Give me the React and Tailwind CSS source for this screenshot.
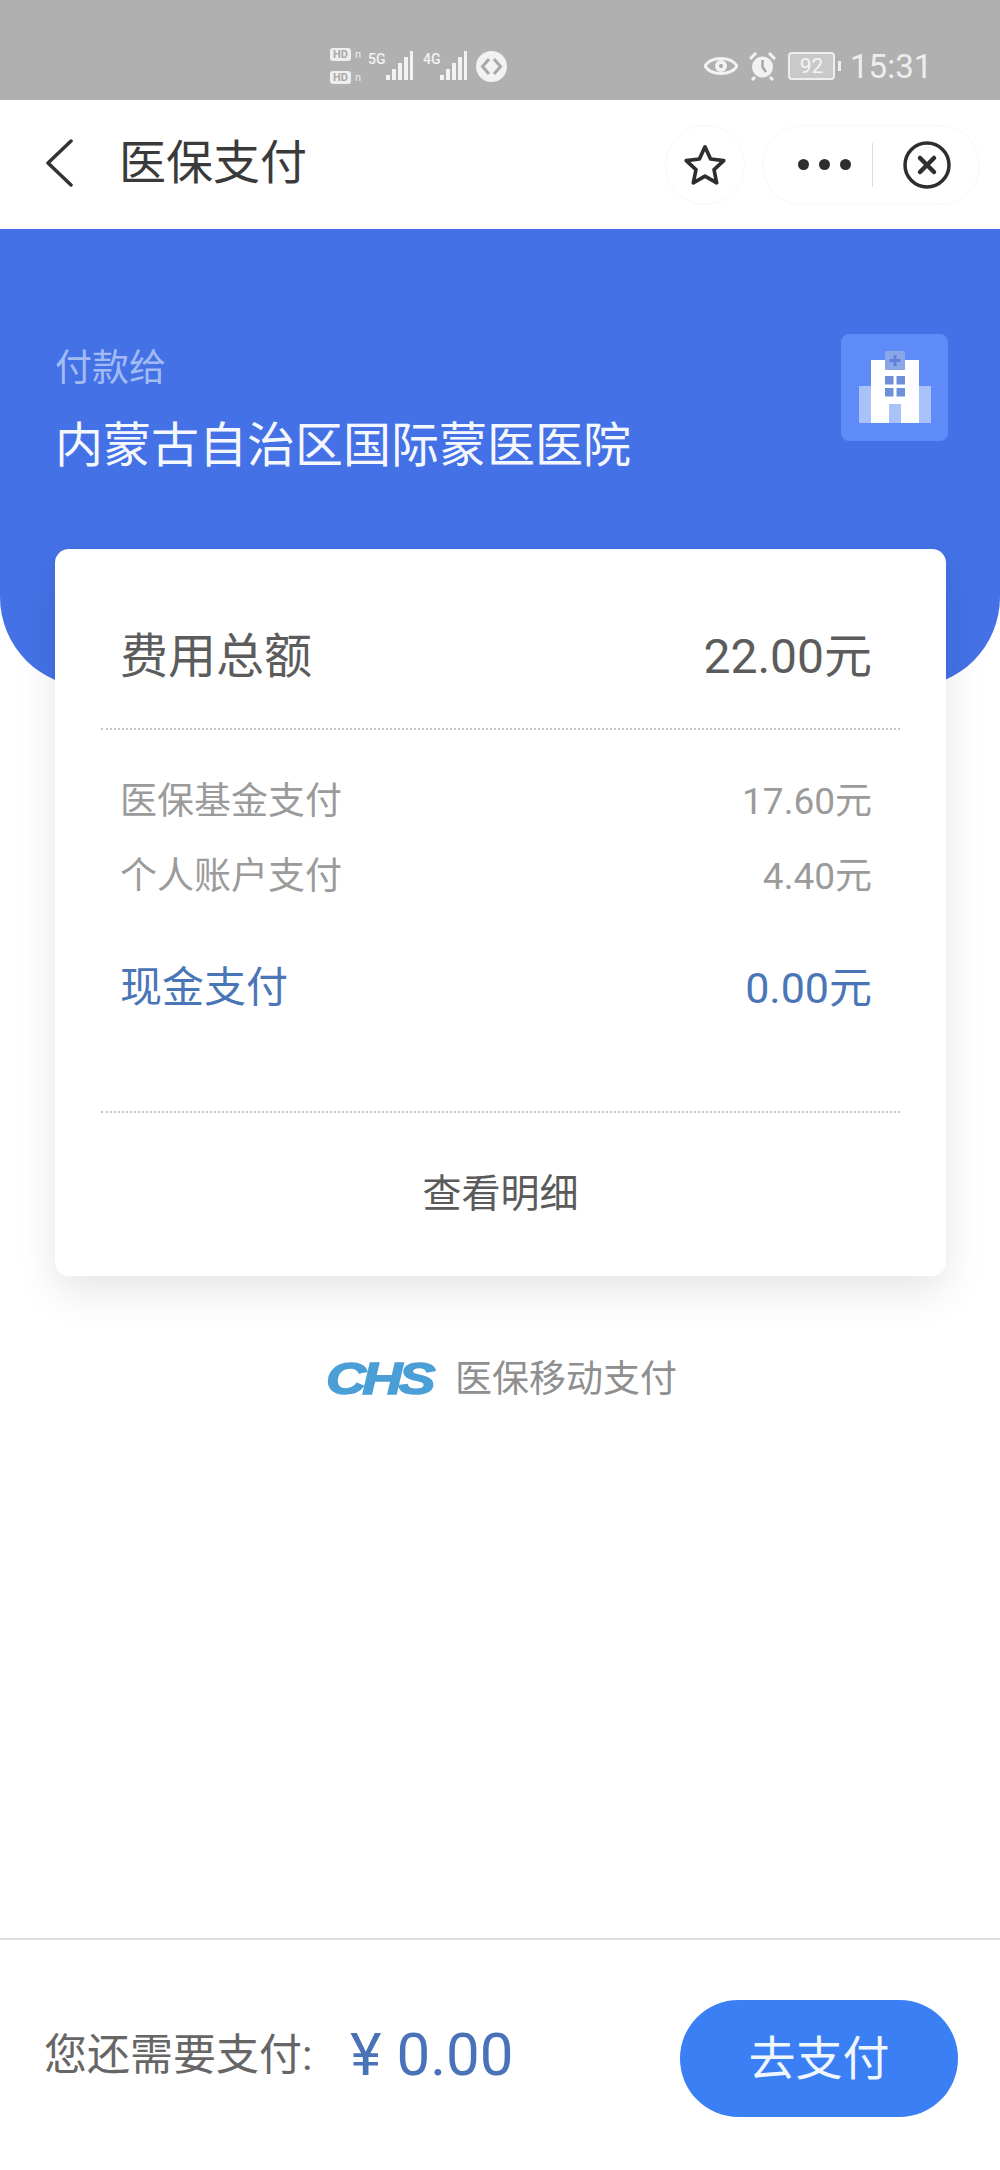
import React from "react";

const cjk = { fontFamily: '"Roboto","Noto Sans CJK SC",sans-serif' };

function Signal({ x = 0 }) {
  return (
    <g transform={`translate(${x} 0)`} fill="#f2f2f2">
      <rect x="0" y="24" width="4" height="5" />
      <rect x="6" y="18" width="4" height="11" />
      <rect x="12" y="12" width="4" height="17" />
      <rect x="18" y="6" width="4" height="23" />
      <rect x="24" y="0" width="3" height="29" />
    </g>
  );
}

function HdTag() {
  return (
    <div className="flex items-center gap-[4px]">
      <span className="flex h-[13px] w-[21px] items-center justify-center rounded-[3px] bg-[#eeeeee] text-[11px] font-bold leading-none text-[#a8a8a8]">HD</span>
      <span className="text-[11px] leading-none text-[#eeeeee]">n</span>
    </div>
  );
}

function StatusBar() {
  return (
    <div className="flex h-[100px] items-center bg-[#b0b0b0] pl-[330px] pt-[32px]" style={cjk}>
      <div className="flex flex-col gap-[10px]">
        <HdTag />
        <HdTag />
      </div>
      <div className="ml-[7px] flex h-[30px] items-start text-[14px] font-medium leading-none text-[#f2f2f2]">
        <span className="mt-[1px] w-[18px]">5G</span>
        <svg width="28" height="30" viewBox="0 0 28 30"><Signal /></svg>
        <span className="ml-[9px] mt-[1px] w-[17px]">4G</span>
        <svg width="28" height="30" viewBox="0 0 28 30"><Signal /></svg>
      </div>
      <svg className="ml-[8px]" width="31" height="31" viewBox="0 0 31 31">
        <circle cx="15.5" cy="15.5" r="15.5" fill="#f2f2f2" />
        <path d="M13 8 L6.5 15.5 L13 23 M18 8 L24.5 15.5 L18 23" fill="none" stroke="#a8a8a8" strokeWidth="3" />
      </svg>
      <svg className="ml-[197px]" width="34" height="24" viewBox="0 0 34 24">
        <path d="M1 12 C7 2 27 2 33 12 C27 22 7 22 1 12 Z" fill="none" stroke="#f2f2f2" strokeWidth="3" />
        <circle cx="17" cy="12" r="6" fill="#f2f2f2" />
        <circle cx="17" cy="12" r="2" fill="#a8a8a8" />
      </svg>
      <svg className="ml-[11px]" width="27" height="29" viewBox="0 0 27 29">
        <circle cx="13.5" cy="15" r="10.5" fill="#f2f2f2" />
        <path d="M13.5 8 V15 L17 20" fill="none" stroke="#a8a8a8" strokeWidth="2.5" />
        <path d="M1 7 L7 1 M26 7 L20 1 M6 25 L3 28 M21 25 L24 28" stroke="#f2f2f2" strokeWidth="3" />
      </svg>
      <div className="ml-[12px] flex h-[28px] w-[47px] items-center justify-center rounded-[4px] border-2 border-[#eeeeee] bg-[#c9c9c9] text-[21px] leading-none text-[#f4f4f4]">92</div>
      <div className="ml-[3px] h-[10px] w-[3px] bg-[#eeeeee]" />
      <span className="ml-[9px] text-[33px] leading-none text-[#eeeeee]">15:31</span>
    </div>
  );
}

function NavBar() {
  return (
    <div className="flex h-[129px] items-center bg-white pl-[45px] pr-[20px]" style={cjk}>
      <svg className="-mt-[3px]" width="28" height="48" viewBox="0 0 28 48">
        <path d="M26 2 L3 24 L26 46" fill="none" stroke="#333333" strokeWidth="3.5" strokeLinecap="round" strokeLinejoin="round" />
      </svg>
      <span className="-mt-[4px] ml-[46px] text-[47px] leading-none text-[#3a3a3a]">医保支付</span>
      <div className="ml-auto flex h-[80px] w-[80px] items-center justify-center rounded-full border border-[#f8f8f8]">
        <svg width="46" height="46" viewBox="0 0 24 24">
          <path d="M12 2.5 L14.9 8.9 L21.8 9.7 L16.7 14.4 L18.1 21.3 L12 17.8 L5.9 21.3 L7.3 14.4 L2.2 9.7 L9.1 8.9 Z" fill="none" stroke="#2e2e2e" strokeWidth="1.9" strokeLinejoin="round" />
        </svg>
      </div>
      <div className="ml-[17px] flex h-[80px] w-[218px] items-center rounded-full border border-[#f8f8f8] pl-[35px]">
        <div className="flex gap-[10px]">
          <span className="h-[11px] w-[11px] rounded-full bg-[#2e2e2e]" />
          <span className="h-[11px] w-[11px] rounded-full bg-[#2e2e2e]" />
          <span className="h-[11px] w-[11px] rounded-full bg-[#2e2e2e]" />
        </div>
        <div className="ml-[21px] h-[44px] w-px bg-[#dddddd]" />
        <svg className="ml-[30px]" width="48" height="48" viewBox="0 0 48 48">
          <circle cx="24" cy="24" r="22" fill="none" stroke="#2e2e2e" strokeWidth="3.5" />
          <path d="M17 17 L31 31 M31 17 L17 31" stroke="#2e2e2e" strokeWidth="4.5" strokeLinecap="round" />
        </svg>
      </div>
    </div>
  );
}

function HospitalIcon() {
  return (
    <div className="flex h-[107px] w-[107px] items-center justify-center rounded-[8px] bg-[#5e8bf8]">
      <svg width="72" height="74" viewBox="0 0 72 74">
        <rect x="0" y="35" width="72" height="37" fill="#a9c2fa" />
        <rect x="12" y="9" width="48" height="63" fill="#ffffff" />
        <rect x="26" y="0" width="20" height="19" rx="1" fill="#8aa6e6" />
        <path d="M36 4 V15 M30.5 9.5 H41.5" stroke="#5f82d6" strokeWidth="3" />
        <rect x="26" y="25" width="8.5" height="8.5" fill="#6f8fd8" />
        <rect x="37.5" y="25" width="8.5" height="8.5" fill="#6f8fd8" />
        <rect x="26" y="37" width="8.5" height="8.5" fill="#6f8fd8" />
        <rect x="37.5" y="37" width="8.5" height="8.5" fill="#6f8fd8" />
        <rect x="30" y="53" width="12" height="19" fill="#a9c2fa" />
      </svg>
    </div>
  );
}

function Row({ label, value, unit, className, labelClass = "" }) {
  return (
    <div className={`flex items-center justify-between leading-none ${className}`}>
      <span className={labelClass}>{label}</span>
      <span>{value}{unit}</span>
    </div>
  );
}

export default function App() {
  return (
    <div className="flex h-[2170px] w-[1000px] flex-col overflow-hidden bg-white" style={cjk}>
      <StatusBar />
      <NavBar />
      <div className="flex-1">
        <div className="flex h-[458px] items-start justify-between rounded-b-[90px] bg-[#4472e6] pl-[55px] pr-[52px] pt-[105px]">
          <div>
            <div className="mt-[16px] text-[37px] leading-none text-[#a3bbf3]">付款给</div>
            <div className="mt-[35px] text-[48px] leading-none text-[#f4f7fe]">内蒙古自治区国际蒙医医院</div>
          </div>
          <HospitalIcon />
        </div>
        <div className="relative ml-[55px] mr-[54px] -mt-[138px] flex h-[727px] flex-col rounded-[14px] bg-white px-[46px] shadow-[0_16px_40px_rgba(0,0,0,0.10)]">
          <Row label="费用总额" value="22.00" unit="元" className="h-[179px] pl-[19px] pr-[28px] pt-[36px] text-[48px] text-[#5c5c5c]" />
          <div className="border-t-2 border-dotted border-[#c6c6c6]" />
          <div className="pl-[19px] pr-[28px] pt-[53px]">
            <Row label="医保基金支付" value="17.60" unit="元" className="h-[37px] text-[37px] text-[#9b9b9b]" />
            <Row label="个人账户支付" value="4.40" unit="元" className="mt-[38px] h-[37px] text-[37px] text-[#9b9b9b]" />
            <Row label="现金支付" value="0.00" unit="元" className="mt-[72px] h-[42px] text-[43px] text-[#4a76b8]" labelClass="text-[42px]" />
          </div>
          <div className="mt-[102px] border-t-2 border-dotted border-[#c6c6c6]" />
          <div className="flex h-[162px] items-center justify-center text-[39px] leading-none text-[#5a5a5a]">查看明细</div>
        </div>
        <div className="mt-[81px] flex items-center justify-center pl-[14px]">
          <span className="inline-block origin-center scale-x-[1.26] font-['Liberation_Sans'] text-[44px] font-bold italic leading-none tracking-[-3px] text-[#4a9fd6] [-webkit-text-stroke:1.5px_#4a9fd6]">CHS</span>
          <span className="ml-[34px] text-[37px] leading-none text-[#8f8f8f]">医保移动支付</span>
        </div>
      </div>
      <div className="flex h-[232px] items-center border-t-2 border-[#dddddd] pl-[44px] pr-[42px]">
        <span className="w-[306px] whitespace-nowrap text-[43px] leading-none text-[#666666]">您还需要支付:</span>
        <span className="whitespace-nowrap text-[60px] font-normal leading-none text-[#4a72b8]">¥ 0.00</span>
        <button className="ml-auto mt-[6px] flex h-[117px] w-[278px] items-center justify-center rounded-full bg-[#3b7ff5] text-[47px] leading-none text-[#f1f7ff]">去支付</button>
      </div>
    </div>
  );
}
